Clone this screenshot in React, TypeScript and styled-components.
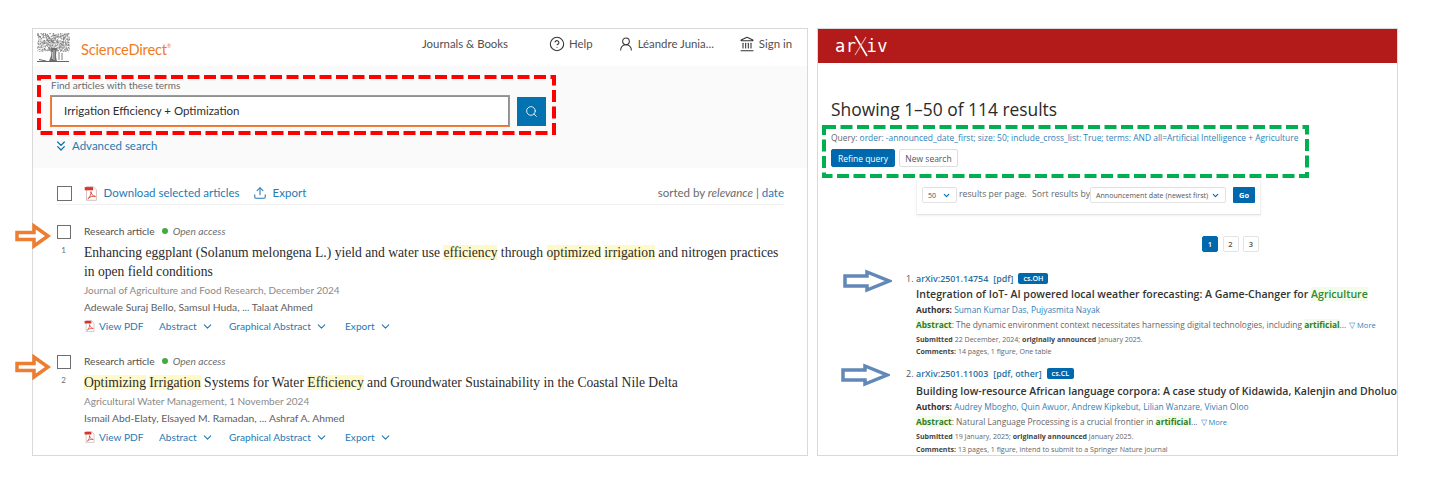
import React from 'react'
import styled, { createGlobalStyle } from 'styled-components'
import { ChevronDown, ChevronsDown, CircleHelp, Landmark, Search, Upload, UserRound } from 'lucide-react'

const sdSans = `Lato, 'Open Sans', sans-serif`
const sdSerif = `'Liberation Serif', serif`
const axSans = `'Open Sans', 'Liberation Sans', sans-serif`
const sdBlue = '#1f7ab5'
const axBlue = '#2f7fb8'

const GlobalStyle = createGlobalStyle`
  html, body { margin: 0; padding: 0; background: #fff; }
  * { box-sizing: border-box; }
`

const Page = styled.div`
  position: relative;
  width: 1436px;
  height: 485px;
  padding: 28px 0 0 32px;
  display: flex;
  gap: 9px;
  overflow: hidden;
`

const Panel = styled.section<{ $width: number }>`
  width: ${(p) => p.$width}px;
  height: 428px;
  border: 1px solid #d9d9d9;
  overflow: hidden;
  background: #fff;
`

/* annotations drawn over the screenshots */
const Overlay = styled.svg<{ $x: number; $y: number; $w: number; $h: number }>`
  position: absolute;
  left: ${(p) => p.$x}px;
  top: ${(p) => p.$y}px;
  width: ${(p) => p.$w}px;
  height: ${(p) => p.$h}px;
`

const DashedFrame = ({ x, y, w, h, color }: { x: number; y: number; w: number; h: number; color: string }) => (
  <Overlay $x={x} $y={y} $w={w} $h={h} viewBox={`0 0 ${w} ${h}`}>
    <rect x='2' y='2' width={w - 4} height={h - 4} fill='none' stroke={color} strokeWidth='4' strokeDasharray='12 4.5' />
  </Overlay>
)

type ArrowProps = { x: number; y: number; w: number; h: number; color: string; shaft: number; neck: number }

const Arrow = ({ x, y, w, h, color, shaft, neck }: ArrowProps) => {
  const top = (h - shaft) / 2
  return (
    <Overlay $x={x} $y={y} $w={w} $h={h} viewBox={`0 0 ${w} ${h}`}>
      <path
        d={`M2 ${top} H${neck} V3 L${w - 3} ${h / 2} L${neck} ${h - 3} V${top + shaft} H2 Z`}
        fill='#fff'
        stroke={color}
        strokeWidth='3.5'
      />
    </Overlay>
  )
}

/* ---------- ScienceDirect ---------- */

const SdHeader = styled.header`
  height: 37px;
  display: flex;
  align-items: center;
  padding: 0 15px 0 3px;
  font-family: ${sdSans};
  font-size: 11.4px;
  color: #505050;
`

const TreeLogo = styled.svg`
  width: 34px;
  height: 31px;
  flex: none;
`

const Brand = styled.span`
  margin: 2px 0 0 11px;
  font-size: 14.7px;
  color: #f07c22;
  letter-spacing: -0.2px;

  sup {
    font-size: 5px;
    vertical-align: 7px;
    line-height: 0;
  }
`

const NavLinks = styled.nav`
  margin-left: auto;
  padding-bottom: 8px;
  display: flex;
  align-items: center;
`

const NavItem = styled.span<{ $gap: number }>`
  display: flex;
  align-items: center;
  gap: 4px;
  margin-left: ${(p) => p.$gap}px;
  white-space: nowrap;
  color: #505050;
`

const SearchArea = styled.div`
  height: 102px;
  padding: 13px 0 0 18px;
  background: #fafafa;
  font-family: ${sdSans};
`

const FieldLabel = styled.div`
  font-size: 10px;
  line-height: 12px;
  color: #6c6c6c;
`

const SearchRow = styled.div`
  display: flex;
  align-items: center;
  gap: 8px;
  margin-top: 4px;
`

const SearchField = styled.div`
  width: 458px;
  height: 30px;
  margin: 1px 0;
  display: flex;
  align-items: center;
  padding: 0 0 2px 12px;
  background: #fff;
  border: 1px solid #8f8f8f;
  outline: 1px solid #f0803c;
  font-size: 11.5px;
  color: #2e2e2e;
`

const SearchButton = styled.div`
  width: 29px;
  height: 29px;
  display: grid;
  place-items: center;
  background: #0272b1;
  color: #fff;
`

const AdvancedLink = styled.div`
  display: flex;
  align-items: center;
  gap: 3px;
  margin: 11px 0 0 2px;
  font-size: 11.5px;
  line-height: 14px;
  color: ${sdBlue};

  svg { color: #0272b1; }
`

const Toolbar = styled.div`
  display: flex;
  align-items: flex-start;
  margin: 18px 23px 0 24px;
  padding-bottom: 3px;
  border-bottom: 1px solid #f0f0f0;
  font-family: ${sdSans};
  font-size: 11.5px;
  line-height: 13px;
  color: ${sdBlue};
`

const Checkbox = styled.span<{ $size: number }>`
  display: block;
  width: ${(p) => p.$size}px;
  height: ${(p) => p.$size}px;
  border: 1.5px solid #6e6e6e;
  background: #fff;
`

const ToolLink = styled.span<{ $gap: number }>`
  display: flex;
  align-items: flex-start;
  gap: 6px;
  margin-left: ${(p) => p.$gap}px;
  white-space: nowrap;
`

const SortNote = styled.span`
  margin-left: auto;
  color: #6a6a6a;
  font-size: 11.5px;

  em { font-style: italic; }
  b { font-weight: 400; color: ${sdBlue}; }
`

const ResultList = styled.div`
  margin: 20px 23px 0 24px;
  font-family: ${sdSans};
  display: flex;
  flex-direction: column;
  gap: 22px;
`

const Article = styled.article`
  display: grid;
  grid-template-columns: 27px 1fr;
`

const CheckColumn = styled.div`
  display: flex;
  flex-direction: column;
  align-items: flex-start;
`

const RowNumber = styled.span`
  width: 13px;
  margin-top: 6px;
  text-align: center;
  font-size: 8px;
  line-height: 10px;
  color: #6e6e6e;
`

const MetaLine = styled.div`
  display: flex;
  align-items: center;
  font-size: 10.2px;
  line-height: 12px;
  color: #505050;
`

const GreenDot = styled.span`
  width: 6px;
  height: 6px;
  margin: 0 5px 0 7px;
  border-radius: 50%;
  background: #3fae3f;
`

const Access = styled.span`
  font-style: italic;
  color: #6e6e6e;
`

const ArticleTitle = styled.h2`
  margin: 6px 0 0;
  font-family: ${sdSerif};
  font-size: 13.6px;
  font-weight: 400;
  line-height: 19px;
  color: #2b2b2b;
`

const Hl = styled.mark`
  background: #fff9c9;
  color: inherit;
`

const Journal = styled.div`
  margin-top: 3px;
  font-size: 10px;
  line-height: 13px;
  color: #8a8a8a;
`

const Authors = styled.div`
  margin-top: 4px;
  font-size: 10.3px;
  line-height: 13px;
  color: #606060;
`

const ActionRow = styled.div`
  display: flex;
  align-items: center;
  margin-top: 5px;
  font-size: 10.15px;
  line-height: 14px;
  color: ${sdBlue};
`

const Action = styled.span<{ $width: number }>`
  display: flex;
  align-items: center;
  gap: 4px;
  width: ${(p) => p.$width}px;
  white-space: nowrap;
`

const PdfIcon = ({ size = 13.6 }: { size?: number }) => (
  <svg width={size} height={size * 1.1} viewBox='0 0 14 16' fill='none'>
    <path d='M2.5.7H9.5L13 4.2V15.3H2.5Z' fill='#fff' stroke='#c9a8a8' strokeWidth='.8' />
    <rect x='.5' y='1.2' width='9' height='3.4' fill='#d9342b' />
    <path d='M4 13.5C6 12 7.5 8.5 7.2 6C7 8 9 11 12 11.2C9.5 10.5 6 11.5 4 13.5Z' stroke='#d9342b' strokeWidth='.9' />
  </svg>
)

const treeDots = Array.from({ length: 520 }, (_, i) => {
  const a = Math.sin(i * 12.9898) * 43758.5453
  const b = Math.sin(i * 78.233) * 12543.123
  return { x: 1 + (a - Math.floor(a)) * 32, y: 1 + (b - Math.floor(b)) * 18 }
})

const ElsevierTree = () => (
  <TreeLogo viewBox='0 0 34 31'>
    {treeDots.map((d, i) => (
      <rect key={i} x={d.x} y={d.y} width='1' height='1' fill={i % 3 ? '#7d7d7d' : '#bdbdbd'} />
    ))}
    <path d='M15 16C16 21 15 25 13 29H21C19.5 25 20 21 21 16Z' fill='#6f6f6f' />
    <path d='M18 18V28M16.5 20V27' stroke='#e6e6e6' strokeWidth='.7' />
    <path d='M1 29.5H33M3 27.5L10 29' stroke='#666' strokeWidth='1' />
    <path d='M23 20V28M26 21V28' stroke='#7d7d7d' strokeWidth='1' />
  </TreeLogo>
)

const ArticleActions = () => (
  <ActionRow>
    <Action $width={75}>
      <PdfIcon size={11} />
      View PDF
    </Action>
    <Action $width={70}>
      Abstract
      <ChevronDown size={13} />
    </Action>
    <Action $width={116}>
      Graphical Abstract
      <ChevronDown size={13} />
    </Action>
    <Action $width={50}>
      Export
      <ChevronDown size={13} />
    </Action>
  </ActionRow>
)

const ScienceDirectPanel = () => (
  <Panel $width={776}>
    <SdHeader>
      <ElsevierTree />
      <Brand>
        ScienceDirect<sup>®</sup>
      </Brand>
      <NavLinks>
        <NavItem $gap={0}>Journals &amp; Books</NavItem>
        <NavItem $gap={41}>
          <CircleHelp size={16} strokeWidth={1.6} color='#333' />
          Help
        </NavItem>
        <NavItem $gap={25}>
          <UserRound size={16} strokeWidth={1.6} color='#333' />
          Léandre Junia...
        </NavItem>
        <NavItem $gap={25}>
          <Landmark size={16} strokeWidth={1.6} color='#333' />
          Sign in
        </NavItem>
      </NavLinks>
    </SdHeader>
    <SearchArea>
      <FieldLabel>Find articles with these terms</FieldLabel>
      <SearchRow>
        <SearchField>Irrigation Efficiency + Optimization</SearchField>
        <SearchButton>
          <Search size={13} strokeWidth={1.6} />
        </SearchButton>
      </SearchRow>
      <AdvancedLink>
        <ChevronsDown size={16} strokeWidth={1.9} />
        Advanced search
      </AdvancedLink>
    </SearchArea>
    <Toolbar>
      <Checkbox $size={15} />
      <ToolLink $gap={12}>
        <PdfIcon />
        Download selected articles
      </ToolLink>
      <ToolLink $gap={13}>
        <Upload size={14} strokeWidth={1.8} />
        Export
      </ToolLink>
      <SortNote>
        sorted by <em>relevance</em> | <b>date</b>
      </SortNote>
    </Toolbar>
    <ResultList>
      <Article>
        <CheckColumn>
          <Checkbox $size={14} />
          <RowNumber>1</RowNumber>
        </CheckColumn>
        <div>
          <MetaLine>
            Research article
            <GreenDot />
            <Access>Open access</Access>
          </MetaLine>
          <ArticleTitle>
            Enhancing eggplant (Solanum melongena L.) yield and water use <Hl>efficiency</Hl> through{' '}
            <Hl>optimized</Hl> <Hl>irrigation</Hl> and nitrogen practices in open field conditions
          </ArticleTitle>
          <Journal>Journal of Agriculture and Food Research, December 2024</Journal>
          <Authors>Adewale Suraj Bello, Samsul Huda, ... Talaat Ahmed</Authors>
          <ArticleActions />
        </div>
      </Article>
      <Article>
        <CheckColumn>
          <Checkbox $size={14} />
          <RowNumber>2</RowNumber>
        </CheckColumn>
        <div>
          <MetaLine>
            Research article
            <GreenDot />
            <Access>Open access</Access>
          </MetaLine>
          <ArticleTitle>
            <Hl>Optimizing</Hl> <Hl>Irrigation</Hl> Systems for Water <Hl>Efficiency</Hl> and Groundwater
            Sustainability in the Coastal Nile Delta
          </ArticleTitle>
          <Journal>Agricultural Water Management, 1 November 2024</Journal>
          <Authors>Ismail Abd-Elaty, Elsayed M. Ramadan, ... Ashraf A. Ahmed</Authors>
          <ArticleActions />
        </div>
      </Article>
    </ResultList>
  </Panel>
)

/* ---------- arXiv ---------- */

const ArxivBar = styled.header`
  height: 34px;
  display: flex;
  align-items: center;
  padding-left: 17px;
  background: #b31b1b;
`

const ArxivLogo = styled.div`
  position: relative;
  display: flex;
  gap: 10px;
  font-family: 'DejaVu Sans Mono', monospace;
  font-size: 17px;
  line-height: 20px;
  color: #fff;
  letter-spacing: 0.5px;

  svg {
    position: absolute;
    left: 18px;
    top: -1px;
  }
`

const ArxivBody = styled.div`
  padding: 34px 0 0 13px;
  font-family: ${axSans};
`

const Heading = styled.h1`
  margin: 0;
  font-size: 17.4px;
  font-weight: 400;
  line-height: 24px;
  color: #2a2a2a;
`

const QueryLine = styled.div`
  margin-top: 11px;
  font-size: 8.45px;
  line-height: 12px;
  color: ${axBlue};
  white-space: nowrap;

  span { color: #666; }
`

const ButtonRow = styled.div`
  display: flex;
  gap: 4px;
  margin-top: 5px;
`

const QueryButton = styled.span<{ $primary?: boolean; $width: number }>`
  width: ${(p) => p.$width}px;
  height: 18px;
  display: grid;
  place-items: center;
  border-radius: 2px;
  font-size: 8.5px;
  color: ${(p) => (p.$primary ? '#fff' : '#555')};
  background: ${(p) => (p.$primary ? '#0068ac' : '#fff')};
  border: 1px solid ${(p) => (p.$primary ? '#0068ac' : '#dedede')};
`

const OptionsBox = styled.div`
  width: 345px;
  height: 35px;
  margin: 13px 0 0 85px;
  padding: 7px 5px 0;
  display: flex;
  align-items: flex-start;
  border-bottom: 1px solid #e4e4e4;
  border-left: 1px solid #f2f2f2;
  border-right: 1px solid #f2f2f2;
  box-shadow: 0 1px 2px rgba(0, 0, 0, 0.06);
  font-size: 8.7px;
  line-height: 14px;
  color: #666;
`

const SelectBox = styled.span<{ $width: number }>`
  flex: none;
  width: ${(p) => p.$width}px;
  height: 16px;
  display: flex;
  align-items: center;
  justify-content: space-between;
  padding: 0 5px;
  border: 1px solid #e2e2e2;
  border-radius: 2px;
  font-size: 7.1px;
  color: #555;
  white-space: nowrap;

  svg { color: #0068ac; flex: none; }
`

const OptionText = styled.span<{ $left: number; $width: number }>`
  flex: none;
  margin-left: ${(p) => p.$left}px;
  width: ${(p) => p.$width}px;
  white-space: nowrap;
`

const GoButton = styled.span`
  flex: none;
  width: 22px;
  height: 16px;
  margin-left: 7px;
  display: grid;
  place-items: center;
  border-radius: 1px;
  background: #0068ac;
  color: #fff;
  font-size: 7.5px;
  font-weight: 700;
`

const Pager = styled.div`
  display: flex;
  gap: 4.5px;
  margin: 21px 0 0 371px;
`

const PageButton = styled.span<{ $current?: boolean }>`
  width: 16px;
  height: 16px;
  display: grid;
  place-items: center;
  border-radius: 2px;
  font-size: 7.5px;
  font-weight: 600;
  color: ${(p) => (p.$current ? '#fff' : '#555')};
  background: ${(p) => (p.$current ? '#0068ac' : '#fff')};
  border: 1px solid ${(p) => (p.$current ? '#0068ac' : '#e4e4e4')};
`

const ArxivList = styled.ol`
  list-style: none;
  margin: 20px 0 0 75px;
  padding: 0;
  display: flex;
  flex-direction: column;
  gap: 11px;
`

const ArxivItem = styled.li`
  display: grid;
  grid-template-columns: 10px 1fr;
  white-space: nowrap;
`

const ItemNumber = styled.span`
  font-size: 9px;
  line-height: 13px;
  color: #555;
`

const IdLine = styled.div`
  display: flex;
  align-items: center;
  height: 12px;
  font-size: 8.9px;
  font-weight: 600;
  color: #2b6f9f;

  span { margin-left: 5px; }
`

const Tag = styled.span`
  display: inline-block;
  margin-left: 5px;
  padding: 0 5px;
  height: 11px;
  border-radius: 2px;
  background: #0068ac;
  color: #fff;
  font-size: 7.2px;
  font-weight: 600;
  line-height: 11px;
`

const ItemTitle = styled.div<{ $gap: number }>`
  margin-top: ${(p) => p.$gap}px;
  font-size: 10.55px;
  font-weight: 600;
  line-height: 16px;
  color: #333;
`

const TitleHit = styled.span`
  background: #f3fbea;
  color: #2e8b2e;
`

const AuthorLine = styled.div`
  margin-top: 2px;
  font-size: 8.4px;
  line-height: 12px;
  color: ${axBlue};

  b { color: #333; font-weight: 700; }
`

const AbstractLine = styled.div`
  margin-top: 3px;
  font-size: 8.4px;
  line-height: 12px;
  color: #666;

  b { font-weight: 700; color: #2e7d1e; background: #f3fbea; }
`

const MoreLink = styled.span`
  margin-left: 3px;
  font-size: 7.5px;
  color: ${axBlue};
`

const SmallLine = styled.div<{ $gap: number }>`
  margin-top: ${(p) => p.$gap}px;
  font-size: 7.05px;
  line-height: 10px;
  color: #666;

  b { font-weight: 700; color: #444; }
`

const ArxivPanel = () => (
  <Panel $width={581}>
    <ArxivBar>
      <ArxivLogo>
        <span>ar</span>
        <span>iv</span>
        <svg width='16' height='22' viewBox='0 0 16 22' fill='none'>
          <path d='M2 1L14 21' stroke='#fff' strokeWidth='1.6' />
          <path d='M13 2L2 20' stroke='#e8a9a9' strokeWidth='1.1' />
        </svg>
      </ArxivLogo>
    </ArxivBar>
    <ArxivBody>
      <Heading>Showing 1–50 of 114 results</Heading>
      <QueryLine>
        <span>Query: </span>order: -announced_date_first; size: 50; include_cross_list: True; terms: AND all=Artificial
        Intelligence + Agriculture
      </QueryLine>
      <ButtonRow>
        <QueryButton $primary $width={64}>
          Refine query
        </QueryButton>
        <QueryButton $width={59}>New search</QueryButton>
      </ButtonRow>
      <OptionsBox>
        <SelectBox $width={35}>
          50
          <ChevronDown size={9} strokeWidth={3} />
        </SelectBox>
        <OptionText $left={2} $width={73}>
          results per page.
        </OptionText>
        <OptionText $left={0} $width={58}>
          Sort results by
        </OptionText>
        <SelectBox $width={136}>
          Announcement date (newest first)
          <ChevronDown size={9} strokeWidth={3} />
        </SelectBox>
        <GoButton>Go</GoButton>
      </OptionsBox>
      <Pager>
        <PageButton $current>1</PageButton>
        <PageButton>2</PageButton>
        <PageButton>3</PageButton>
      </Pager>
      <ArxivList>
        <ArxivItem>
          <ItemNumber>1.</ItemNumber>
          <div>
            <IdLine>
              arXiv:2501.14754<span>[pdf]</span>
              <Tag>cs.OH</Tag>
            </IdLine>
            <ItemTitle $gap={2}>
              Integration of IoT- AI powered local weather forecasting: A Game-Changer for{' '}
              <TitleHit>Agriculture</TitleHit>
            </ItemTitle>
            <AuthorLine>
              <b>Authors:</b> Suman Kumar Das, Pujyasmita Nayak
            </AuthorLine>
            <AbstractLine>
              <b>Abstract</b>: The dynamic environment context necessitates harnessing digital technologies, including{' '}
              <b>artificial</b>...<MoreLink>▽ More</MoreLink>
            </AbstractLine>
            <SmallLine $gap={3}>
              <b>Submitted</b> 22 December, 2024; <b>originally announced</b> January 2025.
            </SmallLine>
            <SmallLine $gap={2}>
              <b>Comments:</b> 14 pages, 1 figure, One table
            </SmallLine>
          </div>
        </ArxivItem>
        <ArxivItem>
          <ItemNumber>2.</ItemNumber>
          <div>
            <IdLine>
              arXiv:2501.11003<span>[pdf, other]</span>
              <Tag>cs.CL</Tag>
            </IdLine>
            <ItemTitle $gap={3.5}>
              Building low-resource African language corpora: A case study of Kidawida, Kalenjin and Dholuo
            </ItemTitle>
            <AuthorLine>
              <b>Authors:</b> Audrey Mbogho, Quin Awuor, Andrew Kipkebut, Lilian Wanzare, Vivian Oloo
            </AuthorLine>
            <AbstractLine>
              <b>Abstract</b>: Natural Language Processing is a crucial frontier in <b>artificial</b>...
              <MoreLink>▽ More</MoreLink>
            </AbstractLine>
            <SmallLine $gap={3}>
              <b>Submitted</b> 19 January, 2025; <b>originally announced</b> January 2025.
            </SmallLine>
            <SmallLine $gap={3.5}>
              <b>Comments:</b> 13 pages, 1 figure, intend to submit to a Springer Nature journal
            </SmallLine>
          </div>
        </ArxivItem>
      </ArxivList>
    </ArxivBody>
  </Panel>
)

export default function App() {
  return (
    <>
      <GlobalStyle />
      <Page>
        <ScienceDirectPanel />
        <ArxivPanel />
        <DashedFrame x={37} y={75} w={519} h={60} color='#ff0000' />
        <DashedFrame x={822} y={125} w={487} h={53} color='#00b050' />
        <Arrow x={15} y={223} w={36} h={26} color='#ed7d31' shaft={7} neck={19} />
        <Arrow x={15} y={354} w={36} h={26} color='#ed7d31' shaft={7} neck={19} />
        <Arrow x={843} y={269} w={49} h={24} color='#6288b8' shaft={10} neck={24} />
        <Arrow x={841} y={363} w={49} h={24} color='#6288b8' shaft={10} neck={24} />
      </Page>
    </>
  )
}
